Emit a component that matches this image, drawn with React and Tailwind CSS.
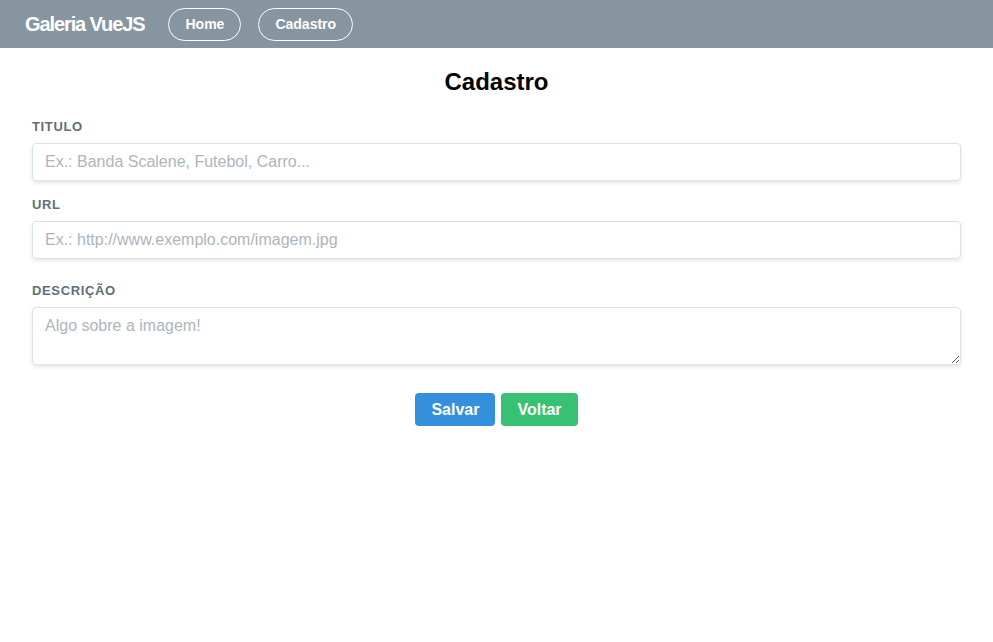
import React from "react";

const font = { fontFamily: '"Liberation Sans", Arial, sans-serif' };

export default function App() {
  return (
    <div className="min-h-screen bg-white font-['Liberation_Sans',Arial,sans-serif]">
      <nav className="flex h-12 items-center bg-[#8795a1] pl-[25px]">
        <span className="mr-6 text-xl font-bold tracking-[-0.055em] text-white">
          Galeria VueJS
        </span>
        <a className="mr-[17px] flex h-[33px] items-center rounded-full border border-white px-4 text-sm font-bold text-white">
          Home
        </a>
        <a className="flex h-[33px] items-center rounded-full border border-white px-4 text-sm font-bold text-white">
          Cadastro
        </a>
      </nav>

      <div className="mx-8 mt-[18px]">
        <h1 className="text-center text-2xl leading-8 font-bold text-black">Cadastro</h1>

        <form className="mt-[21px]">
          <label className="mb-2 block text-[13px] leading-4 font-bold tracking-[0.05em] text-[#606f7b] uppercase">
            Titulo
          </label>
          <input
            className="mb-4 block w-full rounded border border-[#dae1e7] px-3 py-2 text-base leading-5 text-[#606f7b] shadow-[0_2px_4px_0_rgba(0,0,0,0.10)] outline-none placeholder:text-[#adb5bd]"
            placeholder="Ex.: Banda Scalene, Futebol, Carro..."
          />

          <label className="mb-2 block text-[13px] leading-4 font-bold tracking-[0.05em] text-[#606f7b] uppercase">
            URL
          </label>
          <input
            className="mb-6 block w-full rounded border border-[#dae1e7] px-3 py-2 text-base leading-5 text-[#606f7b] shadow-[0_2px_4px_0_rgba(0,0,0,0.10)] outline-none placeholder:text-[#adb5bd]"
            placeholder="Ex.: http://www.exemplo.com/imagem.jpg"
          />

          <label className="mb-2 block text-[13px] leading-4 font-bold tracking-[0.05em] text-[#606f7b] uppercase">
            Descrição
          </label>
          <textarea
            rows={2}
            className="block h-[58px] w-full rounded border border-[#dae1e7] px-3 py-2 text-base leading-5 text-[#606f7b] shadow-[0_2px_4px_0_rgba(0,0,0,0.10)] outline-none placeholder:text-[#adb5bd]"
            placeholder="Algo sobre a imagem!"
            style={font}
          />

          <div className="mt-7 flex justify-center gap-1.5">
            <button
              type="button"
              className="h-[33px] rounded bg-[#3490dc] px-4 text-base font-bold text-white"
            >
              Salvar
            </button>
            <button
              type="button"
              className="h-[33px] rounded bg-[#38c172] px-4 text-base font-bold text-white"
            >
              Voltar
            </button>
          </div>
        </form>
      </div>
    </div>
  );
}
